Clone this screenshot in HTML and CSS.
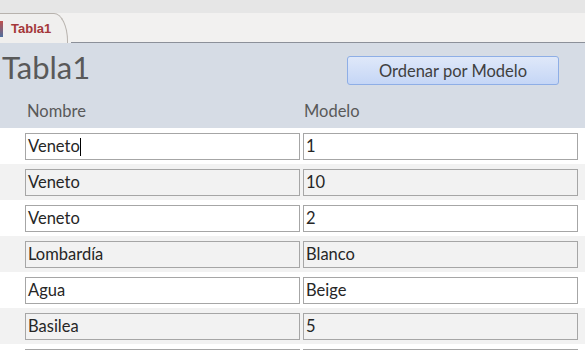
FILE: index.html
```html
<!DOCTYPE html>
<html lang="es">

<head>
    <meta charset="UTF-8">
    <meta name="viewport" content="width=device-width, initial-scale=1.0">
    <title>Tabla1</title>
    <link rel="stylesheet" href="styles.css">
</head>

<body>
    <div class="page">
        <div class="topstrip"></div>
        <div class="tabbar">
            <div class="tab">
                <span class="tab-icon"></span>
                <span class="tab-label">Tabla1</span>
            </div>
            <div class="tabbar-rest"></div>
        </div>

        <div class="form-header">
            <div class="title-row">
                <h1 class="form-title">Tabla1</h1>
                <button class="sort-btn" type="button">Ordenar por Modelo</button>
            </div>
            <div class="labels-row">
                <span class="col-label">Nombre</span>
                <span class="col-label">Modelo</span>
            </div>
        </div>

        <div class="rows">
            <div class="row">
                <div class="field">Veneto<span class="caret"></span></div>
                <div class="field">1</div>
            </div>
            <div class="row alt">
                <div class="field">Veneto</div>
                <div class="field">10</div>
            </div>
            <div class="row">
                <div class="field">Veneto</div>
                <div class="field">2</div>
            </div>
            <div class="row alt">
                <div class="field">Lombardía</div>
                <div class="field">Blanco</div>
            </div>
            <div class="row">
                <div class="field">Agua</div>
                <div class="field">Beige</div>
            </div>
            <div class="row alt">
                <div class="field">Basilea</div>
                <div class="field">5</div>
            </div>
            <div class="row">
                <div class="field"></div>
                <div class="field"></div>
            </div>
        </div>
    </div>
</body>

</html>
```

FILE: styles.css
```css
body {
    margin: 0;
    padding: 0;
    font-family: "Lato", "Open Sans", sans-serif;
    background-color: #ffffff;
}

.page {
    height: 350px;
    overflow: hidden;
}

.topstrip {
    height: 13px;
    background-color: #e6e6e6;
}

.tabbar {
    display: flex;
    height: 30px;
    background-color: #f2f1f0;
}

.tab {
    display: flex;
    align-items: center;
    width: 68px;
    border-top: 1px solid #b7b2ad;
    border-right: 1px solid #b7b2ad;
    border-top-right-radius: 14px 28px;
    background-color: #f0efee;
    box-sizing: border-box;
}

.tab-icon {
    width: 3px;
    height: 16px;
    background: linear-gradient(#c0504d, #4f6f9f);
    margin-right: 8px;
}

.tab-label {
    font-family: "Liberation Sans", Arial, sans-serif;
    font-weight: bold;
    font-size: 13px;
    color: #a4373a;
}

.tabbar-rest {
    flex: 1;
    border-bottom: 1px solid #8c9099;
    margin-left: 3px;
}

.form-header {
    background-color: #d6dce5;
    height: 85px;
    display: flex;
    flex-direction: column;
}

.title-row {
    display: flex;
    align-items: flex-start;
    height: 58px;
}

.form-title {
    margin: 5px 0 0 2px;
    font-weight: normal;
    font-size: 31px;
    color: #595959;
    width: 345px;
}

.sort-btn {
    margin-top: 13px;
    width: 212px;
    height: 29px;
    font-family: inherit;
    font-size: 16.5px;
    color: #404040;
    background: linear-gradient(#dfe8f9, #c5d6f6);
    border: 1px solid #8eaee6;
    border-radius: 3px;
}

.labels-row {
    display: grid;
    grid-template-columns: 277px 1fr;
    padding-left: 27px;
    font-size: 16.5px;
    color: #595959;
}

.row {
    display: grid;
    grid-template-columns: 275px 275px;
    column-gap: 3px;
    align-items: center;
    height: 36px;
    padding-left: 25px;
    box-sizing: border-box;
}

.row.alt {
    background-color: #f2f2f2;
}

.field {
    height: 27px;
    border: 1px solid #a6a6a6;
    box-sizing: border-box;
    padding-left: 2px;
    font-size: 16.5px;
    line-height: 25px;
    color: #262626;
    background-color: #ffffff;
}

.row.alt .field {
    background-color: #f2f2f2;
}

.caret {
    display: inline-block;
    width: 1px;
    height: 18px;
    background-color: #000000;
    vertical-align: middle;
}
```
